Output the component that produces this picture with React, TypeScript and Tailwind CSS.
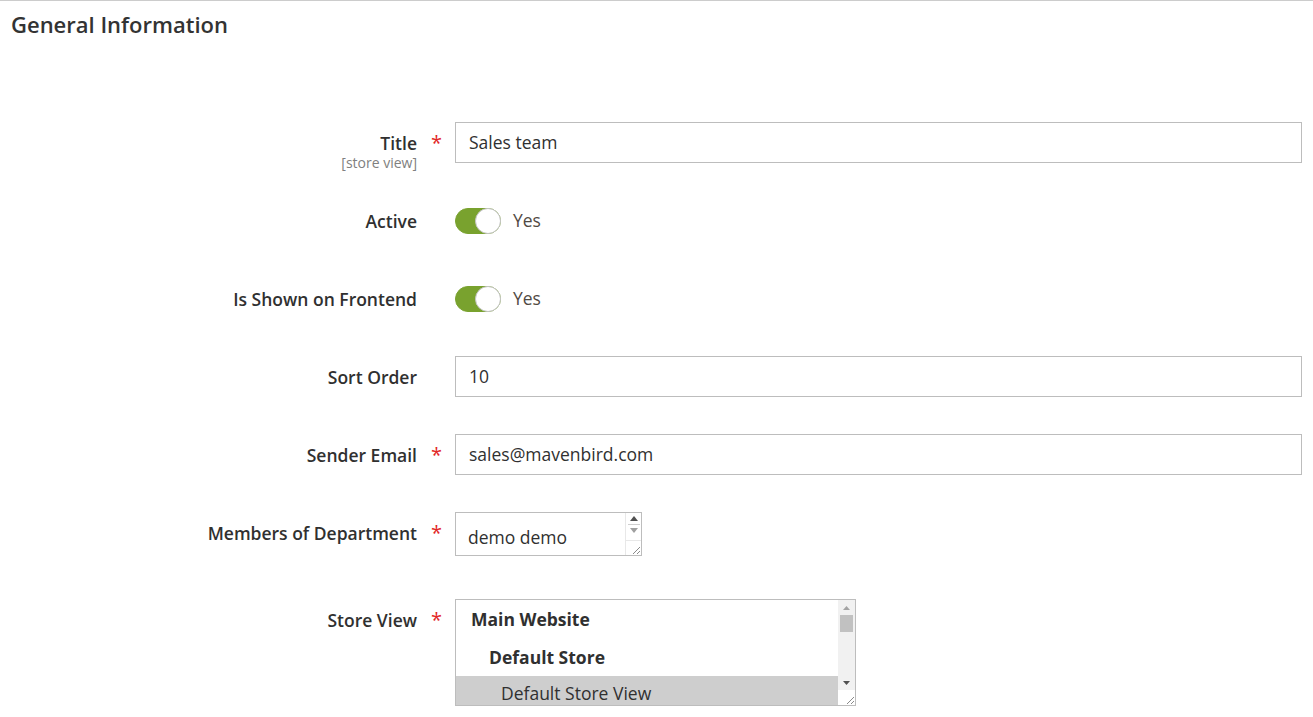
import React from 'react';

const font = { fontFamily: '"Open Sans", "Liberation Sans", sans-serif' };

function Label({ text, required, scope }: { text: string; required?: boolean; scope?: string }) {
  return (
    <>
      <div className="h-[41px] flex flex-col items-end pt-[10px]">
        <span className="text-[17.5px] leading-[22px] font-semibold text-[#303030]">{text}</span>
        {scope && <span className="text-[14px] leading-[16px] text-[#808080] mt-[1px]">{scope}</span>}
      </div>
      <div className="pt-[9px] pl-[14px] text-[20px] leading-[24px] text-[#e22626]">{required ? '*' : ''}</div>
    </>
  );
}

function TextInput({ value }: { value: string }) {
  return (
    <div className="h-[41px] border border-[#bdbdbd] bg-white px-[13px] flex items-center text-[17.5px] text-[#303030]">
      {value}
    </div>
  );
}

function Toggle() {
  return (
    <div className="flex items-center h-[41px] gap-[12px]">
      <div className="relative w-[46px] h-[26px] rounded-full bg-[#79a22e] border border-[#79a22e]">
        <div className="absolute right-[-1px] top-[-1px] w-[26px] h-[26px] rounded-full bg-white border border-[#c4c4c4]" />
      </div>
      <span className="text-[17.5px] text-[#514943]">Yes</span>
    </div>
  );
}

export default function App() {
  return (
    <div className="min-h-[717px] w-[1313px] bg-white border-t border-[#cccccc] px-[11px]" style={font}>
      <h2 className="pt-[8px] text-[22px] font-semibold text-[#333333] leading-[30px]">General Information</h2>

      <div className="grid grid-cols-[406px_38px_1fr] mt-[83px] gap-y-[37px]">
        <Label text="Title" required scope="[store view]" />
        <TextInput value="Sales team" />

        <Label text="Active" />
        <Toggle />

        <Label text="Is Shown on Frontend" />
        <Toggle />

        <Label text="Sort Order" />
        <TextInput value="10" />

        <Label text="Sender Email" required />
        <TextInput value="sales@mavenbird.com" />

        <Label text="Members of Department" required />
        <div className="flex">
          <div className="w-[187px] h-[44px] border border-[#bdbdbd] bg-white flex text-[17.5px] text-[#303030]">
            <div className="flex-1 pl-[12px] pt-[12px] leading-[24px]">demo demo</div>
            <div className="w-[16px] flex flex-col border-l border-[#e8e8e8]">
              <div className="flex flex-col items-center pt-[3px] gap-[3px]">
                <svg width="8" height="5" viewBox="0 0 8 5"><path d="M0 5 L4 0 L8 5 Z" fill="#505050" /></svg>
                <div className="w-[12px] h-px bg-[#cfcfcf]" />
                <svg width="8" height="5" viewBox="0 0 8 5"><path d="M0 0 L4 5 L8 0 Z" fill="#a0a0a0" /></svg>
              </div>
              <div className="mt-auto h-[15px] border-t border-[#e8e8e8] flex items-end justify-end">
                <svg width="10" height="10" viewBox="0 0 10 10"><path d="M2 9 L9 2 M6 9 L9 6" stroke="#8a8a8a" strokeWidth="1" /></svg>
              </div>
            </div>
          </div>
        </div>
      </div>

      <div className="grid grid-cols-[406px_38px_1fr] mt-[43px]">
        <div className="flex flex-col items-end pt-[10px] leading-[22px]">
          <span className="text-[17.5px] font-semibold text-[#303030]">Store View</span>
        </div>
        <div className="pt-[9px] pl-[14px] text-[20px] leading-[24px] text-[#e22626]">*</div>
        <div className="flex">
          <div className="w-[401px] h-[107px] border border-[#bdbdbd] bg-white flex overflow-hidden">
            <div className="flex-1 flex flex-col text-[17.5px] text-[#303030]">
              <div className="h-[38px] shrink-0 pl-[15px] leading-[38px] font-bold">Main Website</div>
              <div className="h-[38px] shrink-0 pl-[33px] leading-[38px] font-bold">Default Store</div>
              <div className="h-[38px] shrink-0 pl-[45px] leading-[34px] bg-[#cecece]">Default Store View</div>
            </div>
            <div className="w-[17px] flex flex-col bg-[#f1f1f1]">
              <div className="h-[15px] flex items-center justify-center">
                <svg width="7" height="4" viewBox="0 0 7 4"><path d="M0 4 L3.5 0 L7 4 Z" fill="#a3a3a3" /></svg>
              </div>
              <div className="mx-[2px] h-[17px] bg-[#c1c1c1]" />
              <div className="mt-auto h-[15px] flex items-center justify-center">
                <svg width="7" height="4" viewBox="0 0 7 4"><path d="M0 0 L3.5 4 L7 0 Z" fill="#505050" /></svg>
              </div>
              <div className="h-[15px] bg-white flex items-end justify-end">
                <svg width="10" height="10" viewBox="0 0 10 10"><path d="M2 9 L9 2 M6 9 L9 6" stroke="#8a8a8a" strokeWidth="1" /></svg>
              </div>
            </div>
          </div>
        </div>
      </div>
    </div>
  );
}
